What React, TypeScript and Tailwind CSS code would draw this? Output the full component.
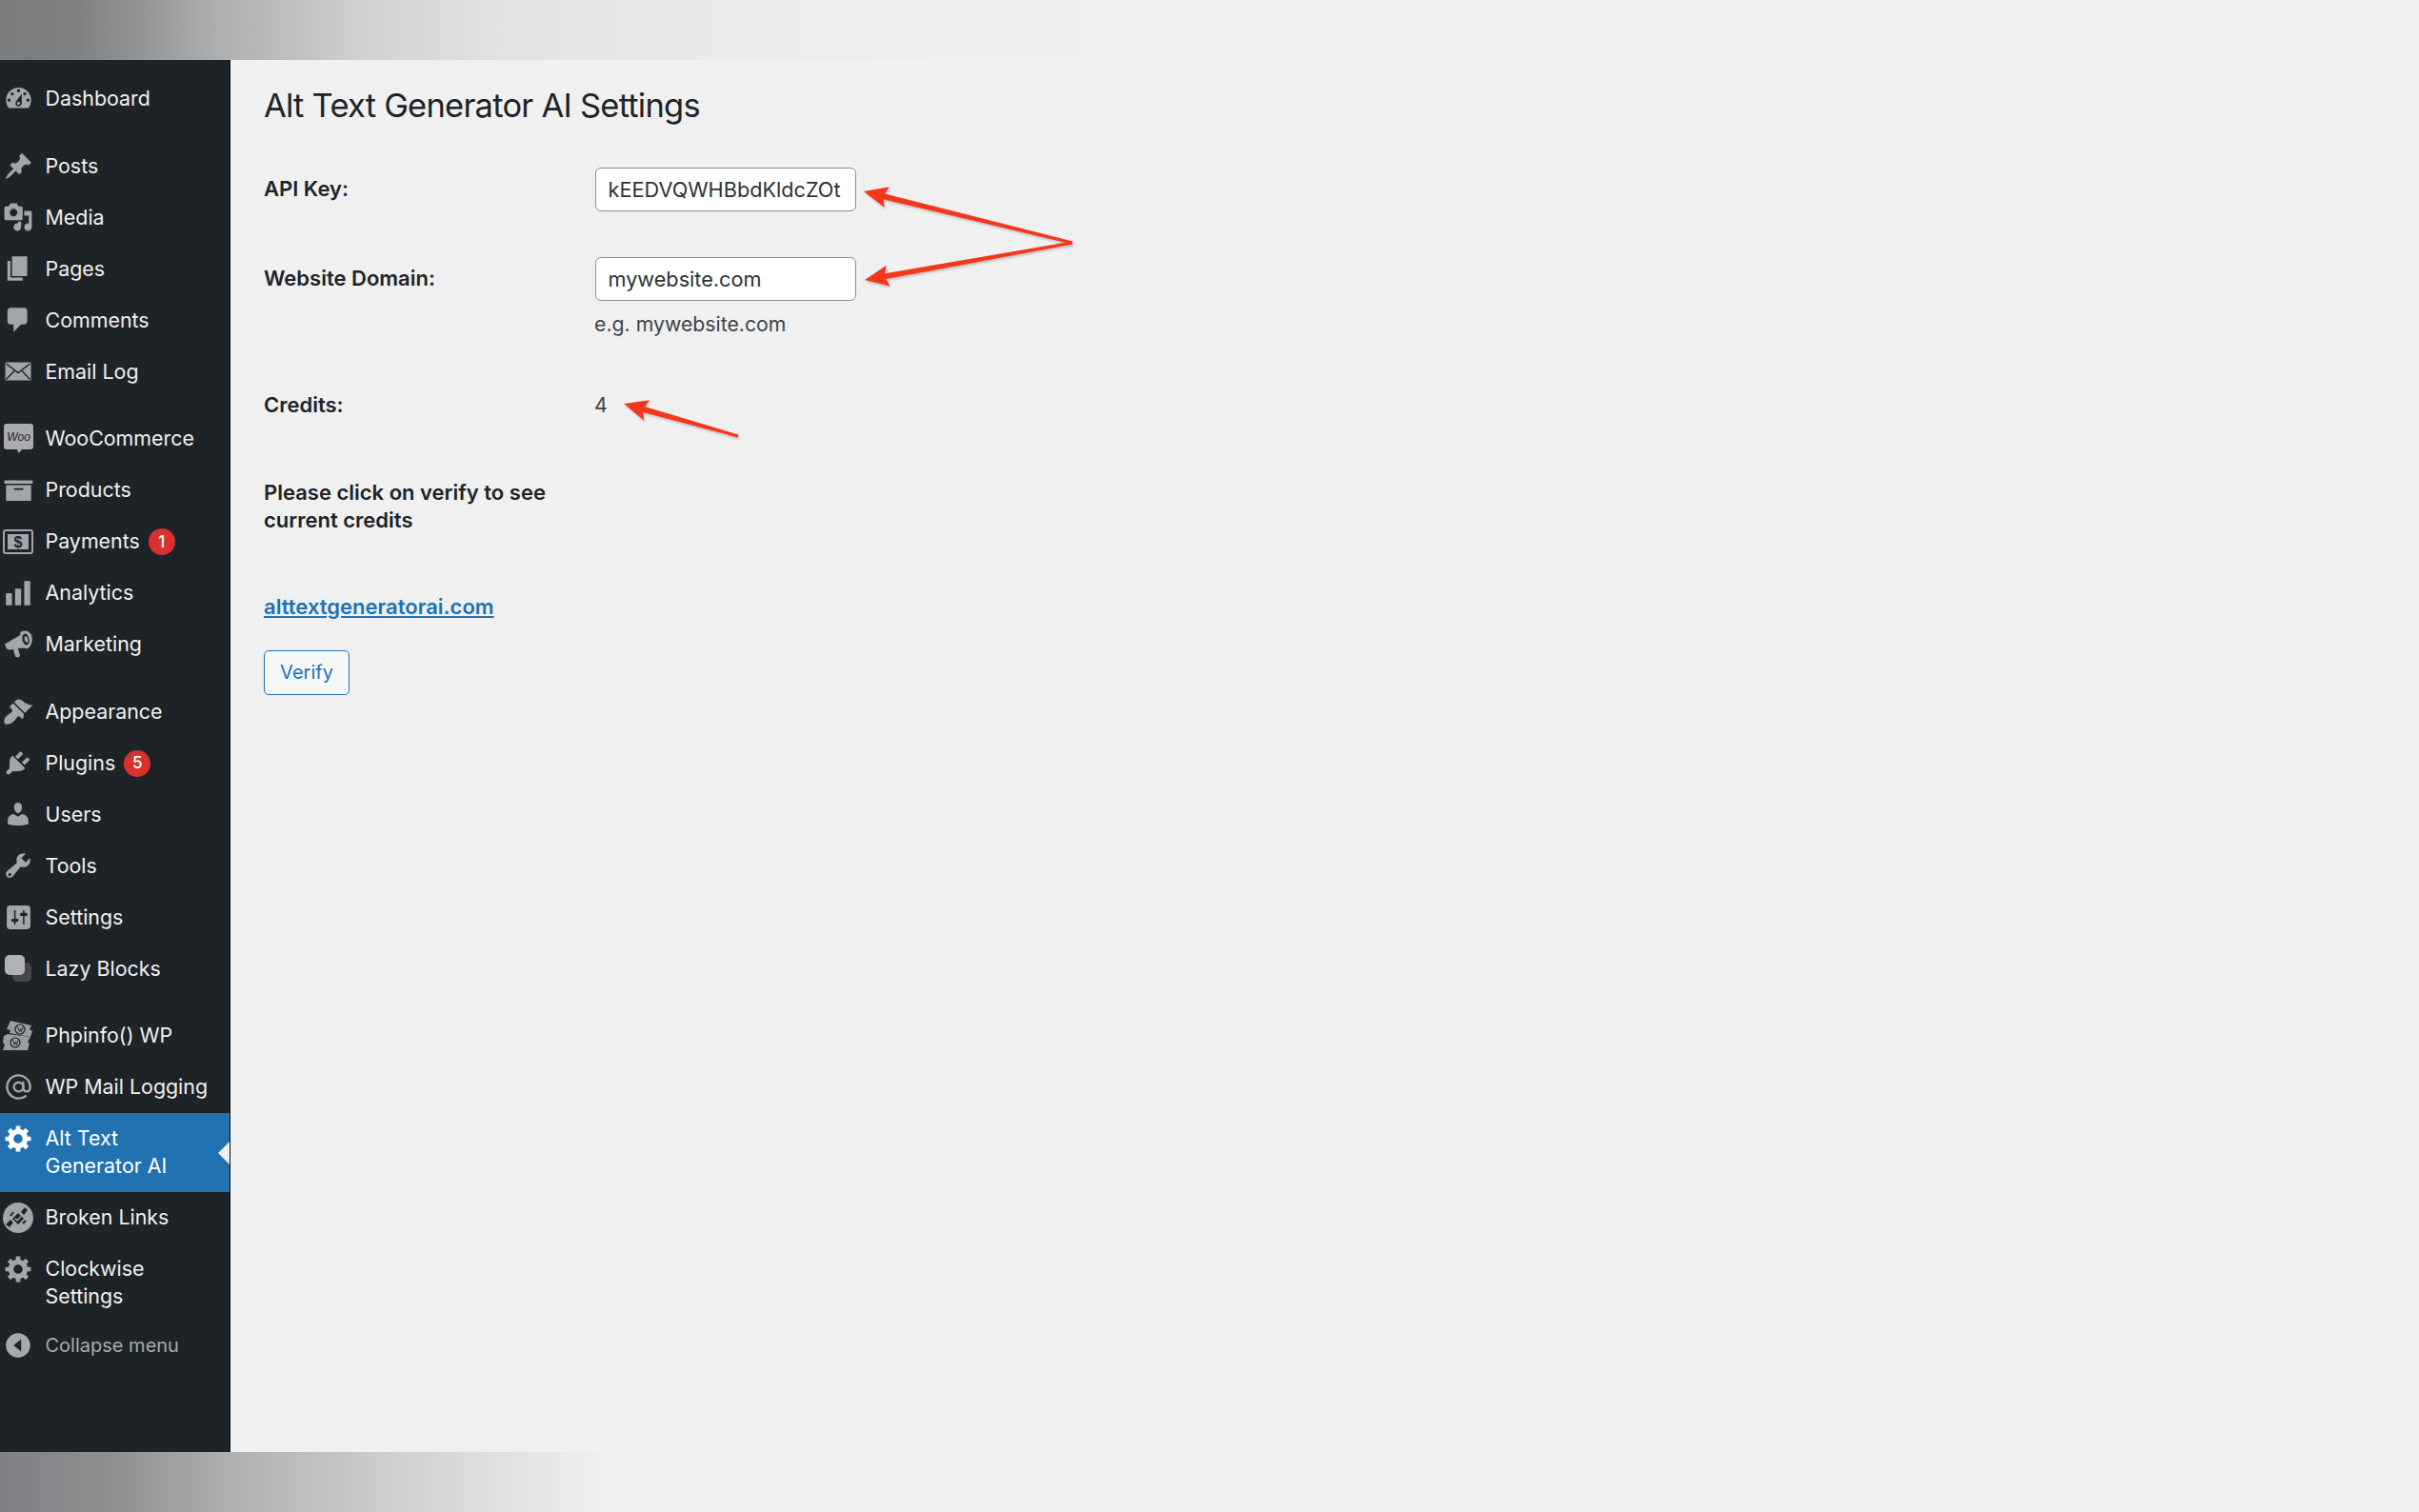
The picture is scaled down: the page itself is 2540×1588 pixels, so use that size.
import React from "react";
import { AtSign } from "lucide-react";

const ink = "#a2a6ab";
const dark = "#1d2327";

function P({ d, size = 30, color = ink }: { d: string; size?: number; color?: string }) {
  return (
    <svg width={size} height={size} viewBox="0 0 20 20" fill={color}>
      <path d={d} fillRule="evenodd" />
    </svg>
  );
}

const gear =
  "M18 12h-2.180c-.17.7-.44 1.350-.81 1.930l1.540 1.540-2.100 2.100-1.540-1.540c-.58.36-1.230.63-1.910.79V19H8v-2.180c-.68-.16-1.330-.43-1.910-.79l-1.540 1.540-2.120-2.120 1.540-1.540c-.36-.58-.63-1.230-.79-1.910H1V9h2.180c.16-.68.43-1.330.79-1.910L2.430 5.550l2.120-2.120 1.540 1.540C6.670 4.610 7.320 4.340 8 4.180V2h3v2.180c.68.16 1.330.43 1.910.79l1.540-1.540 2.120 2.120-1.540 1.540c.36.58.63 1.230.79 1.910H18v3zm-8.500 1.500c1.660 0 3-1.340 3-3s-1.340-3-3-3-3 1.340-3 3 1.340 3 3 3z";

const icons: Record<string, React.ReactNode> = {
  dashboard: <P d="M3.76 16h12.48c1.100-1.370 1.760-3.110 1.760-5 0-4.420-3.580-8-8-8s-8 3.580-8 8c0 1.890.66 3.630 1.760 5zM10 4c.55 0 1 .45 1 1s-.45 1-1 1-1-.45-1-1 .45-1 1-1zM6 6c.55 0 1 .45 1 1s-.45 1-1 1-1-.45-1-1 .45-1 1-1zm8 0c.55 0 1 .45 1 1s-.45 1-1 1-1-.45-1-1 .45-1 1-1zm-5.370 5.550L12 7v6c0 1.100-.9 2-2 2s-2-.9-2-2c0-.57.24-1.080.63-1.450zM4 10c.55 0 1 .45 1 1s-.45 1-1 1-1-.45-1-1 .45-1 1-1zm12 0c.55 0 1 .45 1 1s-.45 1-1 1-1-.45-1-1 .45-1 1-1zm-5 3c0-.55-.45-1-1-1s-1 .45-1 1 .45 1 1 1 1-.45 1-1z" size={33} />,
  posts: <P d="M10.440 3.020l1.820-1.820 6.360 6.350-1.830 1.820c-1.050-.68-2.480-.57-3.410.36l-.75.75c-.92.93-1.040 2.350-.35 3.410l-1.830 1.820-2.410-2.410-2.800 2.790c-.42.42-3.380 2.710-3.800 2.290s1.860-3.390 2.280-3.810l2.790-2.790L4.100 9.360l1.830-1.820c1.050.69 2.480.57 3.400-.36l.75-.75c.93-.92 1.050-2.350.36-3.410z" size={31} />,
  media: <P d="M13 11V4c0-.55-.45-1-1-1h-1.670L9 1H5L3.670 3H2c-.55 0-1 .45-1 1v7c0 .55.45 1 1 1h10c.55 0 1-.45 1-1zM7 4.500c1.380 0 2.500 1.120 2.500 2.500S8.380 9.500 7 9.500 4.500 8.380 4.500 7 5.620 4.500 7 4.500zM14 6h5v10.500c0 1.380-1.120 2.500-2.500 2.500S14 17.880 14 16.500s1.120-2.500 2.500-2.500c.17 0 .34.020.5.050V9h-3V6zm-4 8.050V13h2v3.500c0 1.380-1.120 2.500-2.500 2.500S7 17.880 7 16.500 8.120 14 9.500 14c.17 0 .34.020.5.050z" size={32} />,
  pages: <P d="M6 15V2h10v13H6zm-1 1h8v2H3V5h2v11z" size={32} />,
  comments: <P d="M5 2h9c1.100 0 2 .9 2 2v7c0 1.100-.9 2-2 2h-2l-5 5v-5H5c-1.100 0-2-.9-2-2V4c0-1.100.9-2 2-2z" size={32} />,
  email: (
    <svg width="28" height="20" viewBox="0 0 28 20">
      <rect x="0.5" y="0.500" width="27" height="19" rx="1" fill={ink} />
      <path d="M1.500 2L14 11.500 26.500 2M1.500 18.500L10 9.500M26.500 18.500L18 9.500" stroke={dark} strokeWidth="1.500" fill="none" />
    </svg>
  ),
  woo: (
    <svg width="31" height="31" viewBox="0 0 31 31">
      <path d="M3 0h25a3 3 0 0 1 3 3v21a3 3 0 0 1-3 3h-9l-3.500 4-1.500-4H3a3 3 0 0 1-3-3V3a3 3 0 0 1 3-3z" fill="#a9abae" />
      <text x="15.500" y="18" textAnchor="middle" fontFamily="'Liberation Sans',sans-serif" fontStyle="italic" fontWeight="400" fontSize="12" fill={dark}>Woo</text>
    </svg>
  ),
  products: <P d="M19 4v2H1V4h18zM2 7h16v10H2V7zm11 3V9H7v1h6z" size={33} />,
  payments: (
    <svg width="32" height="26" viewBox="0 0 32 26">
      <rect x="1" y="1" width="30" height="24" rx="2" fill="none" stroke={ink} strokeWidth="2" />
      <rect x="5" y="5" width="22" height="16" fill={ink} />
      <text x="16" y="19" textAnchor="middle" fontFamily="'Liberation Sans',sans-serif" fontWeight="700" fontSize="16" fill={dark}>$</text>
    </svg>
  ),
  analytics: <P d="M18 18V2h-4v16h4zm-6 0V7H8v11h4zm-6 0v-8H2v8h4z" size={32} />,
  marketing: (
    <svg width="29" height="30" viewBox="0 0 29 30" fill={ink}>
      <path d="M0 14.500l18-10.500 4 14.500-8 0.500 2 8-2 1.500-3-1-2-7.500-4 .5-3-1z" />
      <path d="M17 1.500C20 -.5 26 0 28 5s0 11-3 13.500c-2 1.500-4 1-5-2L16.500 5C16 3.500 16 2.500 17 1.500z" fill={ink} />
      <ellipse cx="22" cy="9.500" rx="3.500" ry="6" fill={dark} transform="rotate(-12 22 9.500)" />
      <ellipse cx="22.500" cy="9.500" rx="1.800" ry="3.400" fill={ink} transform="rotate(-12 22.500 9.500)" />
    </svg>
  ),
  appearance: <P d="M14.480 11.060L7.410 3.990l1.500-1.500c.5-.56 2.300-.47 3.510.32 1.210.8 1.430 1.280 2.910 2.100 1.180.64 2.450 1.260 4.450.85zm-.71.71L6.700 4.700 4.930 6.470c-.39.39-.39 1.020 0 1.410l1.060 1.060c.39.39.39 1.030 0 1.420-.6.600-1.430 1.110-2.210 1.690-.35.260-.7.530-1.010.840C1.430 13.710 0 16.700 1.390 18.090c1.380 1.390 4.380 0 5.710-1.340.31-.31.580-.66.840-1.010.570-.78 1.090-1.610 1.690-2.210.39-.39 1.020-.39 1.410 0l1.060 1.060c.39.39 1.020.39 1.410 0z" size={32} />,
  plugins: <P d="M13.110 4.360L9.870 7.600 8 5.730l3.240-3.240c.35-.34 1.050-.2 1.560.32.52.51.66 1.210.31 1.550zm-8 1.770l.91-1.120 9.010 9.010-1.190.84c-.71.710-2.630 1.160-3.820 1.160H6.140L4.310 17.850c-.59.59-1.540.59-2.120 0-.59-.58-.59-1.530 0-2.120l1.840-1.840v-3.990c0-1.200.45-3.120 1.150-3.830zm7.510 3.710l3.240-3.240c.34-.34 1.040-.2 1.550.31.52.52.66 1.220.32 1.560l-3.240 3.240z" size={30} />,
  users: <P d="M10 9.250c-2.270 0-2.730-3.440-2.730-3.440C7 4.020 7.820 2 9.970 2c2.160 0 2.980 2.020 2.710 3.810 0 0-.41 3.440-2.680 3.440zm0 2.570L12.720 10c2.390 0 4.520 2.330 4.520 4.530v2.490s-3.650 1.130-7.240 1.130c-3.650 0-7.240-1.130-7.240-1.130v-2.490c0-2.250 1.940-4.480 4.150-4.480z" size={30} />,
  tools: <P d="M16.680 9.770c-1.340 1.340-3.300 1.670-4.950.99l-5.410 6.520c-.99.990-2.590.990-3.580 0s-.99-2.590 0-3.570l6.520-5.420c-.68-1.650-.35-3.610.99-4.950 1.280-1.280 3.120-1.620 4.720-1.060l-2.890 2.890 2.820 2.820 2.860-2.870c.53 1.580.18 3.420-1.080 4.670zM3.810 16.710c.39.39 1.020.39 1.410 0 .39-.39.39-1.020 0-1.410-.39-.39-1.020-.39-1.410 0-.39.39-.39 1.020 0 1.410z" size={32} />,
  settings: <P d="M18 16V4c0-1.100-.9-2-2-2H4c-1.100 0-2 .9-2 2v12c0 1.100.9 2 2 2h12c1.100 0 2-.9 2-2zM8 11h1c.55 0 1 .45 1 1s-.45 1-1 1H8v1.500c0 .28-.22.5-.5.5s-.5-.22-.5-.5V13H6c-.55 0-1-.45-1-1s.45-1 1-1h1V5.500c0-.28.22-.5.5-.5s.5.22.5.5V11zm5-2h-1c-.55 0-1-.45-1-1s.45-1 1-1h1V5.500c0-.28.22-.5.5-.5s.5.22.5.5V7h1c.55 0 1 .45 1 1s-.45 1-1 1h-1v5.500c0 .28-.22.5-.5.5s-.5-.22-.5-.5V9z" size={31} />,
  lazy: (
    <svg width="29" height="28" viewBox="0 0 29 28">
      <rect x="8" y="8" width="20" height="20" rx="5" fill="#44484c" />
      <rect x="0" y="0" width="21" height="21" rx="5" fill="#b0b2b5" />
    </svg>
  ),
  phpinfo: (
    <svg width="32" height="31" viewBox="0 0 32 31">
      <path d="M8 0l22 5-2 4 3 2-2 6-22-4 1-3-4-1z" fill="#9a9da1" />
      <path d="M1 16l4-2 24 3-3 5 2 2-2 7H0l2-6-2-2z" fill="#9a9da1" />
      <circle cx="18" cy="9" r="5" fill="none" stroke={dark} strokeWidth="1.200" />
      <circle cx="13" cy="23" r="5" fill="none" stroke={dark} strokeWidth="1.200" />
      <path d="M15.500 6.500l2 5 1-3 1 3 1.500-5M10.500 20.500l2 5 1-3 1 3 1.500-5" fill="none" stroke={dark} strokeWidth=".9" />
    </svg>
  ),
  mail: <AtSign size={29} color={ink} strokeWidth={2} />,
  active: (
    <svg width="30" height="30" viewBox="0 0 19 19" fill="#ffffff">
      <path d={gear} fillRule="evenodd" transform="translate(0 -1)" />
    </svg>
  ),
  broken: (
    <svg width="32" height="32" viewBox="0 0 32 32">
      <circle cx="16" cy="16" r="16" fill={ink} />
      <path d="M3 23l5-5 3 3-4 5zM26 8l-4 5-3-3 4-5z" fill={dark} />
      <path d="M10 17l6-6 6 6-6 6z" fill={dark} />
      <path d="M12.800 16.500l2.300 2.300 4-4.200" fill="none" stroke={ink} strokeWidth="1.500" />
      <path d="M8 14l3-4M21 22l3-3" stroke={dark} strokeWidth="2" />
    </svg>
  ),
  clockwise: (
    <svg width="30" height="30" viewBox="0 0 19 19" fill={ink}>
      <path d={gear} fillRule="evenodd" transform="translate(0 -1)" />
    </svg>
  ),
  collapse: <P d="M18 10c0-4.420-3.580-8-8-8s-8 3.580-8 8 3.580 8 8 8 8-3.580 8-8zm-6-4v8L7 10z" size={32} color="#a7aaad" />,
};

type Item = { icon: string; label: React.ReactNode; badge?: string; active?: boolean };

const groups: Item[][] = [
  [{ icon: "dashboard", label: "Dashboard" }],
  [
    { icon: "posts", label: "Posts" },
    { icon: "media", label: "Media" },
    { icon: "pages", label: "Pages" },
    { icon: "comments", label: "Comments" },
    { icon: "email", label: "Email Log" },
  ],
  [
    { icon: "woo", label: "WooCommerce" },
    { icon: "products", label: "Products" },
    { icon: "payments", label: "Payments", badge: "1" },
    { icon: "analytics", label: "Analytics" },
    { icon: "marketing", label: "Marketing" },
  ],
  [
    { icon: "appearance", label: "Appearance" },
    { icon: "plugins", label: "Plugins", badge: "5" },
    { icon: "users", label: "Users" },
    { icon: "tools", label: "Tools" },
    { icon: "settings", label: "Settings" },
    { icon: "lazy", label: "Lazy Blocks" },
  ],
  [
    { icon: "phpinfo", label: "Phpinfo() WP" },
    { icon: "mail", label: "WP Mail Logging" },
    { icon: "active", label: "Alt Text Generator AI", active: true },
    { icon: "broken", label: "Broken Links" },
    { icon: "clockwise", label: "Clockwise Settings" },
  ],
];

function MenuRow({ item }: { item: Item }) {
  return (
    <div
      className={
        item.active
          ? "relative flex items-start py-[12.5px] text-white bg-[#2271b1]"
          : "relative flex items-start py-[12.5px] text-[#f0f0f1]"
      }
    >
      <div className="flex h-[29px] w-[38px] shrink-0 items-center justify-center">{icons[item.icon]}</div>
      <div className="ml-[9.5px] flex w-[178px] items-start">
        <span>{item.label}</span>
        {item.badge && (
          <span className="ml-[9px] mt-[1px] flex h-[28px] w-[28px] shrink-0 items-center justify-center rounded-full bg-[#d8312f] text-[17px] font-medium text-white">
            {item.badge}
          </span>
        )}
      </div>
      {item.active && (
        <span className="absolute right-0 top-[30px] h-0 w-0 border-y-[12px] border-r-[12px] border-y-transparent border-r-[#f0f0f1]" />
      )}
    </div>
  );
}

function Arrow({ x1, y1, x2, y2, w1, w2, hl, hw }: { x1: number; y1: number; x2: number; y2: number; w1: number; w2: number; hl: number; hw: number }) {
  const len = Math.hypot(x2 - x1, y2 - y1);
  const ux = (x2 - x1) / len;
  const uy = (y2 - y1) / len;
  const nx = -uy;
  const ny = ux;
  const bx = x2 - ux * hl;
  const by = y2 - uy * hl;
  const pt = (x: number, y: number) => `${x.toFixed(1)},${y.toFixed(1)}`;
  const pts = [
    pt(x1 + (nx * w1) / 2, y1 + (ny * w1) / 2),
    pt(bx + (nx * w2) / 2, by + (ny * w2) / 2),
    pt(bx + nx * hw - ux * 3, by + ny * hw - uy * 3),
    pt(x2, y2),
    pt(bx - nx * hw - ux * 3, by - ny * hw - uy * 3),
    pt(bx - (nx * w2) / 2, by - (ny * w2) / 2),
    pt(x1 - (nx * w1) / 2, y1 - (ny * w1) / 2),
  ].join(" ");
  return <polygon points={pts} fill="#f4361c" />;
}

const labelCls = "w-[347px] shrink-0 text-[22px] font-semibold text-[#1d2327]";
const inputCls =
  "ml-[1px] h-[46px] w-[274px] rounded-[6px] border-[1.5px] border-[#8c8f94] bg-white px-[12.5px] text-[21.700px] text-[#2c3338] outline-none";

export default function App() {
  return (
    <div className="relative flex h-[1588px] w-[2540px] flex-col overflow-hidden bg-[#f0f0f1] font-['Inter','Liberation_Sans',sans-serif] text-[21.400px] leading-[29px] text-[#3c434a]">
      <div className="h-[63px] shrink-0 bg-[linear-gradient(90deg,#7b7c7e_0px,#7e7f80_76px,#adaeaf_230px,#d0d1d2_382px,#e4e4e4_535px,#ebebeb_765px,#eeeeef_918px,#f0f0f1_1200px)]" />
      <div className="flex h-[1462px] shrink-0">
        <nav className="flex w-[242px] shrink-0 flex-col gap-[16.500px] border-r border-[#0b0d0f] bg-[#1d2327] pt-[13.500px]">
          {groups.map((g, i) => (
            <div key={i} className="flex flex-col">
              {g.map((item, j) => (
                <MenuRow key={j} item={item} />
              ))}
            </div>
          ))}
          <div className="-mt-[16.500px] flex items-center pt-[10px] text-[#a7aaad]">
            <div className="flex h-[29px] w-[38px] items-center justify-center">{icons.collapse}</div>
            <span className="ml-[9.500px] text-[20px]">Collapse menu</span>
          </div>
        </nav>
        <main className="flex-1 pl-[35px] pt-[24px]">
          <h1 className="text-[34.500px] font-normal leading-[47px] tracking-[-0.77px] text-[#1d2327]">Alt Text Generator AI Settings</h1>
          <div className="mt-[42px] flex">
            <label className={`${labelCls} pt-[8px]`}>API Key:</label>
            <input className={inputCls} readOnly value="kEEDVQWHBbdKldcZOt" />
          </div>
          <div className="mt-[48px] flex">
            <label className={`${labelCls} pt-[8px]`}>Website Domain:</label>
            <div>
              <input className={inputCls} readOnly value="mywebsite.com" />
              <p className="mt-[10px] text-[21.250px]">e.g. mywebsite.com</p>
            </div>
          </div>
          <div className="mt-[56px] flex">
            <div className={labelCls}>Credits:</div>
            <div>4</div>
          </div>
          <p className="mt-[63px] w-[330px] text-[22px] font-semibold text-[#1d2327]">Please click on verify to see current credits</p>
          <a className="mt-[62px] block text-[22px] font-semibold text-[#2271b1] underline" href="#">
            alttextgeneratorai.com
          </a>
          <button className="mt-[31px] block h-[47px] w-[90px] rounded-[5px] border-[1.5px] border-[#2271b1] bg-[#f6f7f7] text-[20px] text-[#2271b1]">
            Verify
          </button>
        </main>
      </div>
      <div className="h-[63px] shrink-0 bg-[linear-gradient(90deg,#7f8084_0px,#8f9091_120px,#aeafb1_240px,#cccdcf_400px,#e6e6e7_560px,#f0f0f1_640px)]" />
      <svg className="pointer-events-none absolute left-0 top-0 drop-shadow-[1px_2px_1px_rgba(0,0,0,0.2)]" width="2540" height="1588">
        <Arrow x1={1126} y1={255} x2={907} y2={201} w1={3} w2={6} hl={22} hw={11} />
        <Arrow x1={1126} y1={255} x2={908} y2={294} w1={3} w2={6} hl={22} hw={11} />
        <Arrow x1={775} y1={458} x2={655} y2={424} w1={3} w2={6} hl={22} hw={11} />
      </svg>
    </div>
  );
}
